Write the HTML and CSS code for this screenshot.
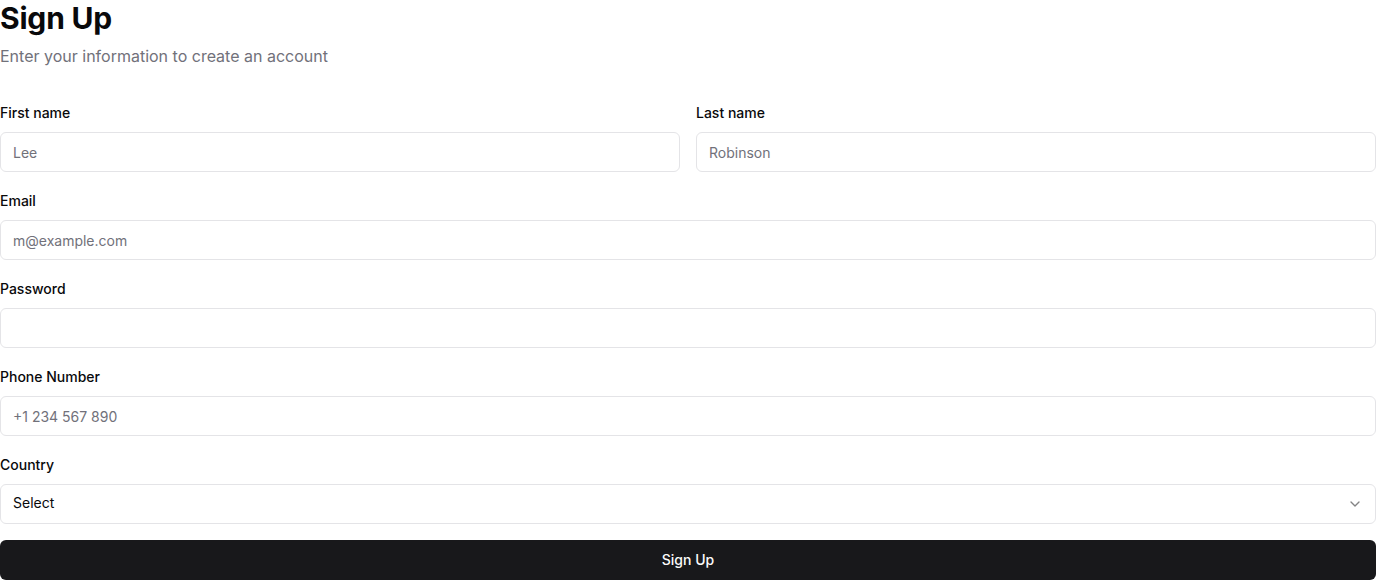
FILE: index.html
```html
<!DOCTYPE html>
<html lang="en">
<head>
<meta charset="utf-8">
<title>Sign Up</title>
<link rel="stylesheet" href="styles.css">
</head>
<body>
<div class="page">
  <header class="head">
    <h1 class="title">Sign Up</h1>
    <p class="subtitle">Enter your information to create an account</p>
  </header>
  <form class="form">
    <div class="row two">
      <div class="field">
        <label class="label">First name</label>
        <input class="input" placeholder="Lee">
      </div>
      <div class="field">
        <label class="label">Last name</label>
        <input class="input" placeholder="Robinson">
      </div>
    </div>
    <div class="field">
      <label class="label">Email</label>
      <input class="input" placeholder="m@example.com">
    </div>
    <div class="field">
      <label class="label">Password</label>
      <input class="input" type="password">
    </div>
    <div class="field">
      <label class="label">Phone Number</label>
      <input class="input" placeholder="+1 234 567 890">
    </div>
    <div class="field">
      <label class="label">Country</label>
      <button type="button" class="input select">
        <span>Select</span>
        <svg class="chev" width="16" height="16" viewBox="0 0 24 24" fill="none" stroke="currentColor" stroke-width="2" stroke-linecap="round" stroke-linejoin="round"><path d="m6 9 6 6 6-6"/></svg>
      </button>
    </div>
    <button type="button" class="submit">Sign Up</button>
  </form>
</div>
</body>
</html>
```

FILE: styles.css
```css
* { box-sizing: border-box; }
html, body { margin: 0; padding: 0; background: #fff; }
body {
  font-family: Inter, "Noto Sans", sans-serif;
  color: #09090b;
}
.page { width: 1376px; }
.head { display: flex; flex-direction: column; gap: 8px; }
.title {
  margin: 0;
  font-size: 30px;
  line-height: 36px;
  font-weight: 700;
  letter-spacing: -0.2px;
}
.subtitle {
  margin: 0;
  font-size: 16px;
  line-height: 24px;
  color: #71717a;
}
.form {
  margin-top: 38px;
  display: flex;
  flex-direction: column;
  gap: 22px;
}
.row.two {
  display: grid;
  grid-template-columns: 1fr 1fr;
  gap: 16px;
}
.field { display: flex; flex-direction: column; gap: 12px; }
.label {
  font-size: 14px;
  line-height: 14px;
  font-weight: 500;
}
.input {
  height: 40px;
  width: 100%;
  border: 1px solid #e4e4e7;
  border-radius: 6px;
  padding: 0 12px;
  font-family: inherit;
  font-size: 14px;
  color: #09090b;
  background: #fff;
  outline: none;
}
.input::placeholder { color: #71717a; }
.select {
  display: flex;
  align-items: center;
  justify-content: space-between;
  text-align: left;
  line-height: 20px;
  padding-bottom: 2px;
  cursor: pointer;
}
.chev { color: #09090b; opacity: 0.5; margin-top: 2px; }
.submit {
  margin-top: -6px;
  height: 40px;
  width: 100%;
  border: none;
  border-radius: 6px;
  background: #18181b;
  color: #fafafa;
  font-family: inherit;
  font-size: 14px;
  font-weight: 500;
  padding-bottom: 2px;
  cursor: pointer;
}
```
